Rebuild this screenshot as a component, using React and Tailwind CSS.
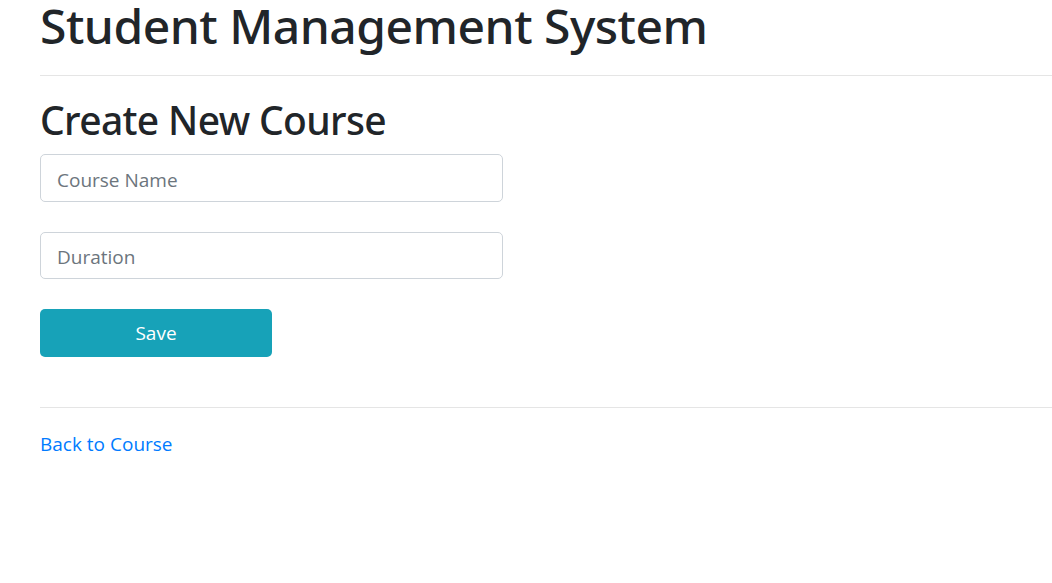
export default function App() {
  return (
    <div className="min-h-screen bg-white pl-10 font-['Open_Sans',sans-serif] text-[#212529]">
      <h1 className="pt-[1px] font-['Noto_Sans',sans-serif] text-[48px] font-medium leading-[50px] tracking-[-0.5px]">
        Student Management System
      </h1>
      <hr className="mt-6 border-t border-[rgba(0,0,0,0.1)]" />
      <h2 className="mt-5 font-['Noto_Sans',sans-serif] text-[39px] font-medium leading-[48px] tracking-[-0.65px]">
        Create New Course
      </h2>
      <form className="mt-[10px]" onSubmit={(e) => e.preventDefault()}>
        <input
          type="text"
          placeholder="Course Name"
          className="block h-[48px] w-[463px] rounded-[5px] border border-[#ced4da] px-4 pt-[3px] text-[19px] text-[#495057] placeholder-[#6c757d] outline-none"
        />
        <input
          type="text"
          placeholder="Duration"
          className="mt-[30px] block h-[47px] w-[463px] rounded-[5px] border border-[#ced4da] px-4 pt-[2px] text-[19px] text-[#495057] placeholder-[#6c757d] outline-none"
        />
        <button
          type="submit"
          className="mt-[30px] block h-[48px] w-[232px] rounded-[5px] bg-[#17a2b8] pt-[1px] text-[19px] text-white"
        >
          Save
        </button>
      </form>
      <hr className="mt-[50px] border-t border-[rgba(0,0,0,0.1)]" />
      <a href="#" className="mt-[21px] inline-block text-[19px] leading-[30px] text-[#007bff]">
        Back to Course
      </a>
    </div>
  );
}
